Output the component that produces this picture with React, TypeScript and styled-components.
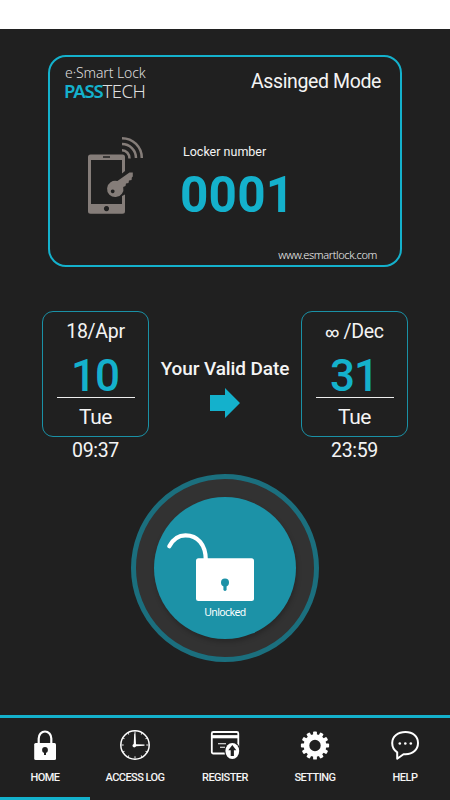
import React from "react";
import styled, { createGlobalStyle } from "styled-components";

const CYAN = "#14b1cc";
const INK = "#202020";

const Global = createGlobalStyle`
  * { box-sizing: border-box; }
  body { margin: 0; background: ${INK}; font-family: Roboto, "Liberation Sans", sans-serif; }
  svg { display: block; }
`;

const Screen = styled.main`
  width: 450px;
  height: 800px;
  overflow: hidden;
  display: flex;
  flex-direction: column;
  background: ${INK};
  color: #f4f4f4;
`;

const StatusBar = styled.div`
  height: 29px;
  flex: none;
  background: #fff;
`;

const Card = styled.section`
  width: 354px;
  height: 212px;
  flex: none;
  margin: 26px 0 0 48px;
  padding: 0 19px 0 14px;
  border: 2px solid ${CYAN};
  border-radius: 18px;
  display: flex;
  flex-direction: column;
`;

const CardHeader = styled.header`
  display: flex;
  justify-content: space-between;
  height: 78px;
`;

const Brand = styled.div`
  padding-top: 7px;
  font-family: "Noto Sans", sans-serif;
  font-weight: 300;
  white-space: nowrap;
  color: #dedede;
`;

const BrandTop = styled.div`
  font-size: 14px;
  line-height: 18px;
  letter-spacing: -0.1px;
  padding-left: 1px;
`;

const BrandName = styled.div`
  font-size: 18.5px;
  line-height: 17px;
  letter-spacing: -0.5px;
  b { font-weight: 600; letter-spacing: -1.2px; color: ${CYAN}; }
`;

const Mode = styled.div`
  padding-top: 13px;
  font-size: 19.5px;
  line-height: 24px;
  letter-spacing: -0.38px;
  white-space: nowrap;
`;

const CardBody = styled.div`
  display: flex;
  height: 108px;
`;

const PhoneSlot = styled.div`
  width: 119px;
  padding-left: 22px;
`;

const LockerLabel = styled.div`
  padding-top: 9px;
  font-size: 12.5px;
  line-height: 16px;
`;

const LockerNumber = styled.div`
  font-size: 49.5px;
  font-weight: 700;
  line-height: 60px;
  letter-spacing: 0.2px;
  margin: 5px 0 0 -3px;
  color: ${CYAN};
`;

const Site = styled.div`
  align-self: flex-end;
  margin: 4px 4px 0 0;
  flex: none;
  font: 300 11px/16px "Noto Sans", sans-serif;
  letter-spacing: -0.38px;
`;

const Validity = styled.section`
  display: flex;
  height: 150px;
  flex: none;
  margin: 44px 42px 0;
  justify-content: space-between;
`;

const DateColumn = styled.div`
  width: 107px;
  text-align: center;
`;

const DateBox = styled.div`
  height: 126px;
  border: 1px solid #1a91a6;
  border-radius: 11px;
  display: flex;
  flex-direction: column;
  align-items: center;
`;

const Month = styled.div`
  height: 24px;
  margin-top: 8px;
  font-size: 19.5px;
  line-height: 24px;
  letter-spacing: -0.3px;
  white-space: pre;
`;

const Infinity = styled.span`
  font-size: 13.5px;
  font-weight: 500;
  vertical-align: 1px;
  line-height: 1;
`;

const Day = styled.div`
  width: 78px;
  height: 54px;
  padding-right: 1px;
  border-bottom: 1px solid #eee;
  color: ${CYAN};
  font-size: 44px;
  font-weight: 500;
  line-height: 65px;
  letter-spacing: -1px;
`;

const Weekday = styled.div`
  margin-top: 6px;
  font-size: 21px;
  font-weight: 400;
  line-height: 26px;
  letter-spacing: -0.5px;
`;

const Time = styled.div`
  margin-top: 1px;
  font-size: 19.5px;
  line-height: 26px;
  letter-spacing: -0.35px;
`;

const Middle = styled.div`
  display: flex;
  flex-direction: column;
  align-items: center;
  padding-top: 46px;
  width: 140px;
`;

const ValidTitle = styled.div`
  font-size: 19px;
  font-weight: 500;
  line-height: 24px;
  letter-spacing: -0.1px;
  white-space: nowrap;
  margin-bottom: 7px;
`;

const LockRing = styled.button`
  width: 188px;
  height: 188px;
  flex: none;
  margin: 13px 0 0 131px;
  padding: 0;
  border: 5px solid #1b6f7e;
  border-radius: 50%;
  background: #323232;
  display: grid;
  place-items: center;
`;

const LockDisc = styled.span`
  width: 142px;
  height: 142px;
  border-radius: 50%;
  background: #1c92a7;
  box-shadow: 1px 3px 5px rgba(0, 0, 0, 0.22);
  display: flex;
  flex-direction: column;
  color: #fff;
`;

const LockLabel = styled.span`
  font: 400 10.5px/14px "Noto Sans", sans-serif;
  letter-spacing: -0.6px;
  text-align: center;
  margin-top: 1px;
`;

const TabBar = styled.nav`
  height: 85px;
  margin-top: auto;
  flex: none;
  border-top: 3px solid ${CYAN};
  display: grid;
  grid-template-columns: repeat(5, 90px);
`;

const Tab = styled.a<{ $active?: boolean }>`
  display: flex;
  flex-direction: column;
  align-items: center;
  padding-top: 12px;
  border-bottom: 3px solid ${(p) => (p.$active ? CYAN : "transparent")};
  font-size: 11px;
  font-weight: 500;
  line-height: 16px;
  letter-spacing: -0.55px;
  white-space: nowrap;
  svg { margin-bottom: 10px; }
`;

const PhoneIcon = () => (
  <svg width="58" height="80" viewBox="86 135 58 80">
    <path
      fill="#857d79"
      fillRule="evenodd"
      d="M90.5 154.5H122.500a2.500 2.500 0 0 1 2.500 2.500V171L122 173.500V160H91V204H122V196L125 194.500V211.300a2.500 2.500 0 0 1-2.500 2.500H90.500a2.500 2.500 0 0 1-2.500-2.500V157a2.500 2.500 0 0 1 2.500-2.500ZM103 156.300v1.400h7v-1.400ZM106.500 206a2.600 2.600 0 1 0 .01 0Z"
    />
    <path
      fill="#857d79"
      fillRule="evenodd"
      d="M129.500 172.500h3.300v4l-1 1-.2 2.500-2.600.4-.5 2.500-2.500.5-.5 2.500-2.300 1a8.200 8.200 0 1 1-5.800-5.900ZM112.700 189.400a1.900 1.900 0 1 0 .01 0Z"
    />
    <g fill="none" stroke="#857d79" strokeWidth="2.500">
      <path d="M122 138.200C133 138.200 141.800 147 141.800 158" />
      <path d="M122 144C129.800 144 136 150.200 136 158" />
      <path d="M122 150.200C126.300 150.200 129.500 154 129.500 158.500" />
    </g>
  </svg>
);

const ArrowIcon = () => (
  <svg width="30" height="30" viewBox="0 0 30 30">
    <path fill={CYAN} d="M0 7H15V0L30 15 15 30V23H0Z" />
  </svg>
);

const OpenLockIcon = () => (
  <svg width="142" height="107" viewBox="154 497 142 107">
    <path
      d="M169.300 546.200C172.800 539.500 178.500 535.300 185.500 535.300C197.500 535.300 205.800 544.500 205.800 560"
      fill="none"
      stroke="#fff"
      strokeWidth="4.200"
      strokeLinecap="round"
    />
    <rect x="196" y="558.300" width="58" height="42.700" rx="2.500" fill="#fff" />
    <circle cx="225" cy="582.500" r="4" fill="#1c92a7" />
    <path d="M225 583v6.300" stroke="#1c92a7" strokeWidth="3.200" strokeLinecap="round" />
  </svg>
);

const HomeIcon = () => (
  <svg width="30" height="30" viewBox="0 0 30 30">
    <path d="M8.700 14V8.500a6.300 7 0 0 1 12.600 0V14" fill="none" stroke="#fff" strokeWidth="2.200" />
    <rect x="4.200" y="13" width="21.800" height="17" rx="1.500" fill="#fff" />
    <circle cx="15" cy="20" r="2.900" fill={INK} />
    <path d="M15 20v5" stroke={INK} strokeWidth="2" />
  </svg>
);

const ClockIcon = () => (
  <svg width="30" height="30" viewBox="0 0 30 30">
    <circle cx="15" cy="15" r="14.200" fill="none" stroke="#fff" strokeWidth="1.500" />
    <g stroke="#fff" strokeWidth=".9">
      {Array.from({ length: 12 }, (_, i) => (
        <path key={i} d={i % 3 ? "M15 1.500v1.300" : "M15 1.500v2.200"} transform={`rotate(${i * 30} 15 15)`} />
      ))}
    </g>
    <path d="M14.200 3.500h1.300l.5 10.700 8.500.3v1.200l-8.500.5a1.800 1.800 0 1 1-2.300-2.300Z" fill="#fff" />
  </svg>
);

const RegisterIcon = () => (
  <svg width="30" height="30" viewBox="0 0 30 30">
    <rect x="1.800" y="2" width="26.500" height="21.500" rx="1.500" fill="none" stroke="#fff" strokeWidth="1.800" />
    <path d="M2 6.700H28" stroke="#fff" strokeWidth="3.200" />
    <path d="M8 13.700h8M10 17.200h5" stroke="#fff" strokeWidth="1.100" />
    <ellipse cx="22.300" cy="21" rx="8" ry="9.200" fill={INK} />
    <ellipse cx="22.300" cy="21" rx="6.900" ry="8" fill="#fff" />
    <path d="M22.300 15l4 5.200h-2.400v5.800h-3.200v-5.800h-2.400Z" fill={INK} />
  </svg>
);

const GearIcon = () => (
  <svg width="30" height="30" viewBox="0 0 30 30">
    <circle cx="15" cy="15.500" r="8.500" fill="none" stroke="#fff" strokeWidth="5.600" />
    {Array.from({ length: 12 }, (_, i) => (
      <path key={i} d="M13.100 5.500V2.300q0-.9.900-.9h2q.9 0 .9.900V5.500Z" fill="#fff" transform={`rotate(${i * 30} 15 15.500)`} />
    ))}
  </svg>
);

const HelpIcon = () => (
  <svg width="30" height="30" viewBox="0 0 30 30">
    <path
      d="M15.500 2C8 2 2.200 6.500 2.200 13C2.200 17.200 4 20.200 7.200 22.300V28.700L13.500 24.200H15.500C23 24.200 28 19.500 28 13C28 6.500 22.800 2 15.500 2Z"
      fill="none"
      stroke="#fff"
      strokeWidth="2"
      strokeLinejoin="round"
    />
    <g fill="#fff">
      <circle cx="9.800" cy="13.500" r="1.300" />
      <circle cx="15.300" cy="13.500" r="1.300" />
      <circle cx="20.800" cy="13.500" r="1.300" />
    </g>
  </svg>
);

const tabs = [
  { label: "HOME", Icon: HomeIcon },
  { label: "ACCESS LOG", Icon: ClockIcon },
  { label: "REGISTER", Icon: RegisterIcon },
  { label: "SETTING", Icon: GearIcon },
  { label: "HELP", Icon: HelpIcon },
];

type DateProps = { month: React.ReactNode; day: string; weekday: string; time: string };

const DatePanel = ({ month, day, weekday, time }: DateProps) => (
  <DateColumn>
    <DateBox>
      <Month>{month}</Month>
      <Day>{day}</Day>
      <Weekday>{weekday}</Weekday>
    </DateBox>
    <Time>{time}</Time>
  </DateColumn>
);

export default function App() {
  return (
    <>
      <Global />
      <Screen>
        <StatusBar />
        <Card>
          <CardHeader>
            <Brand>
              <BrandTop>e·Smart Lock</BrandTop>
              <BrandName><b>PASS</b>TECH</BrandName>
            </Brand>
            <Mode>Assinged Mode</Mode>
          </CardHeader>
          <CardBody>
            <PhoneSlot><PhoneIcon /></PhoneSlot>
            <div>
              <LockerLabel>Locker number</LockerLabel>
              <LockerNumber>0001</LockerNumber>
            </div>
          </CardBody>
          <Site>www.esmartlock.com</Site>
        </Card>
        <Validity>
          <DatePanel month="18/Apr" day="10" weekday="Tue" time="09:37" />
          <Middle>
            <ValidTitle>Your Valid Date</ValidTitle>
            <ArrowIcon />
          </Middle>
          <DatePanel month={<><Infinity>∞</Infinity> /Dec</>} day="31" weekday="Tue" time="23:59" />
        </Validity>
        <LockRing>
          <LockDisc>
            <OpenLockIcon />
            <LockLabel>Unlocked</LockLabel>
          </LockDisc>
        </LockRing>
        <TabBar>
          {tabs.map(({ label, Icon }, i) => (
            <Tab key={label} $active={i === 0}>
              <Icon />
              {label}
            </Tab>
          ))}
        </TabBar>
      </Screen>
    </>
  );
}
